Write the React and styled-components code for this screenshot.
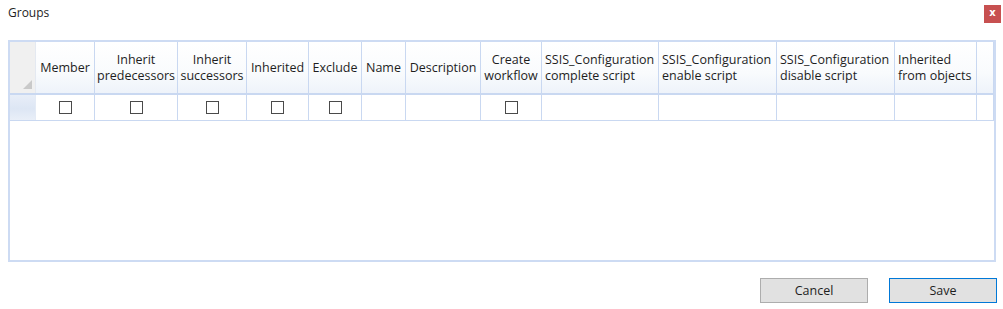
import React from "react"
import styled, { createGlobalStyle } from "styled-components"

const GlobalStyle = createGlobalStyle`
  html, body {
    margin: 0;
    padding: 0;
    background: #ffffff;
  }
  body {
    font-family: "Open Sans", "Noto Sans", "Liberation Sans", sans-serif;
    font-size: 12.5px;
    color: #1e1e1e;
  }
`

const columns = [
  { key: "member", label: ["Member"], width: 59, align: "center", check: true },
  { key: "pred", label: ["Inherit", "predecessors"], width: 83, align: "center", check: true },
  { key: "succ", label: ["Inherit", "successors"], width: 69, align: "center", check: true },
  { key: "inh", label: ["Inherited"], width: 62, align: "center", check: true },
  { key: "excl", label: ["Exclude"], width: 53, align: "center", check: true },
  { key: "name", label: ["Name"], width: 44, align: "center" },
  { key: "desc", label: ["Description"], width: 75, align: "center" },
  { key: "wf", label: ["Create", "workflow"], width: 61, align: "center", check: true },
  { key: "complete", label: ["SSIS_Configuration", "complete script"], width: 117, align: "left" },
  { key: "enable", label: ["SSIS_Configuration", "enable script"], width: 118, align: "left" },
  { key: "disable", label: ["SSIS_Configuration", "disable script"], width: 118, align: "left" },
  { key: "objects", label: ["Inherited", "from objects"], width: 82, align: "left" },
]

const template = `26px ${columns.map((c) => c.width + "px").join(" ")} 1fr`

const Page = styled.div`
  width: 1003px;
  height: 309px;
  box-sizing: border-box;
  padding: 0 7px 0 8px;
  display: flex;
  flex-direction: column;
  overflow: hidden;
`

const TitleBar = styled.div`
  height: 40px;
  display: flex;
  justify-content: space-between;
  align-items: flex-start;
  margin-right: -5px;
`

const Title = styled.div`
  padding-top: 5px;
  font-size: 12px;
  line-height: 16px;
`

const CloseButton = styled.div`
  margin-top: 5px;
  width: 17px;
  height: 18px;
  background: #c75050;
  color: #ffffff;
  font-size: 10px;
  font-weight: bold;
  line-height: 16px;
  text-align: center;
  font-family: "DejaVu Sans", sans-serif;
`

const Grid = styled.div`
  height: 222px;
  box-sizing: border-box;
  border: 2px solid #cddbf3;
  background: #ffffff;
`

const Row = styled.div`
  display: grid;
  grid-template-columns: ${template};
  height: ${({ $h }) => $h}px;
  border-bottom: ${({ $b }) => $b}px solid #c9d8f1;
`

const HeaderCell = styled.div`
  display: flex;
  flex-direction: column;
  justify-content: center;
  align-items: ${({ $align }) => ($align === "left" ? "flex-start" : "center")};
  text-align: ${({ $align }) => $align};
  padding: 0 3px;
  line-height: 16px;
  border-right: 1px solid #c9d8f1;
  background: linear-gradient(to bottom, #ffffff 0%, #f9fbfd 60%, #eef3fa 100%);
  white-space: nowrap;
  overflow: hidden;
`

const Corner = styled.div`
  position: relative;
  background: #f0f0f0;
  border-right: 1px solid #e4e9f1;

  &::after {
    content: "";
    position: absolute;
    right: 3px;
    bottom: 4px;
    width: 0;
    height: 0;
    border-left: 9px solid transparent;
    border-bottom: 9px solid #c9c9c9;
  }
`

const RowHead = styled.div`
  background: linear-gradient(to bottom, #e8eef8 0%, #dde6f4 55%, #e9eff8 100%);
  border-right: 1px solid #e4ebf6;
`

const Cell = styled.div`
  display: flex;
  align-items: center;
  justify-content: center;
  border-right: 1px solid #c9d8f1;
`

const Check = styled.span`
  width: 13px;
  height: 13px;
  box-sizing: border-box;
  border: 1px solid #4a4a4a;
  background: #ffffff;
`

const Footer = styled.div`
  display: flex;
  justify-content: flex-end;
  gap: 21px;
  padding-top: 16px;
  margin-right: -1px;
`

const Button = styled.button`
  width: 108px;
  height: 25px;
  box-sizing: border-box;
  background: #e1e1e1;
  border: 1px solid ${({ $primary }) => ($primary ? "#0078d7" : "#adadad")};
  font-family: inherit;
  font-size: 12.5px;
  color: #1e1e1e;
  padding: 0;
`

const App = () => {
  return (
    <>
      <GlobalStyle />
      <Page>
        <TitleBar>
          <Title>Groups</Title>
          <CloseButton>x</CloseButton>
        </TitleBar>
        <Grid>
          <Row $h={51} $b={2}>
            <Corner />
            {columns.map((c) => (
              <HeaderCell key={c.key} $align={c.align}>
                {c.label.map((line) => (
                  <span key={line}>{line}</span>
                ))}
              </HeaderCell>
            ))}
            <HeaderCell $align="left" />
          </Row>
          <Row $h={25} $b={1}>
            <RowHead />
            {columns.map((c) => (
              <Cell key={c.key}>{c.check && <Check />}</Cell>
            ))}
            <Cell />
          </Row>
        </Grid>
        <Footer>
          <Button>Cancel</Button>
          <Button $primary>Save</Button>
        </Footer>
      </Page>
    </>
  )
}

export default App
